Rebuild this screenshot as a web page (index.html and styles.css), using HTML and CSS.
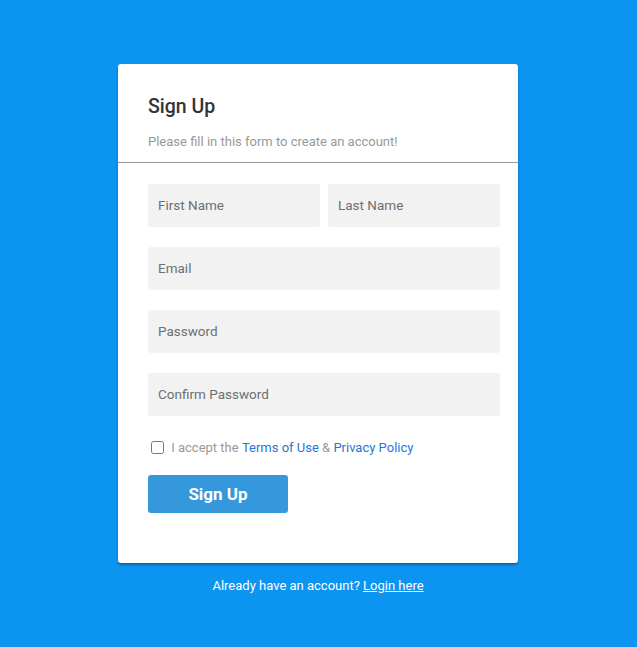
FILE: index.html
```html
<!DOCTYPE html>
<html>
<head>
<meta charset="utf-8">
<link rel="stylesheet" href="styles.css">
</head>
<body>
<div class="page">
  <form class="card">
    <h2 class="title">Sign Up</h2>
    <p class="hint">Please fill in this form to create an account!</p>
    <hr class="rule">
    <div class="row">
      <input class="field" type="text" placeholder="First Name">
      <input class="field" type="text" placeholder="Last Name">
    </div>
    <div class="row">
      <input class="field" type="email" placeholder="Email">
    </div>
    <div class="row">
      <input class="field" type="password" placeholder="Password">
    </div>
    <div class="row">
      <input class="field" type="password" placeholder="Confirm Password">
    </div>
    <label class="accept"><input class="check" type="checkbox"> I accept the <a href="#">Terms of Use</a> &amp; <a href="#">Privacy Policy</a></label>
    <button class="btn" type="button">Sign Up</button>
  </form>
  <div class="footer">Already have an account? <a href="#">Login here</a></div>
</div>
</body>
</html>
```
FILE: styles.css
```css
html, body {
  margin: 0;
  padding: 0;
}
body {
  background: #0b94f0;
  font-family: Roboto, "Liberation Sans", sans-serif;
  color: #333;
}
.page {
  display: flex;
  flex-direction: column;
  align-items: center;
  padding-top: 64px;
  padding-right: 1px;
}
.card {
  width: 400px;
  box-sizing: border-box;
  background: #fff;
  border-radius: 3px;
  box-shadow: 0 2px 2px rgba(0,0,0,0.3);
  padding: 31px 18px 50px 30px;
}
.title {
  margin: 0;
  font-size: 19.5px;
  font-weight: 500;
  color: #333;
  line-height: 24px;
}
.hint {
  margin: 15px 0 0;
  font-size: 13px;
  color: #999;
  line-height: 16px;
}
.rule {
  margin: 12px -18px 21px -30px;
  border: 0;
  border-top: 1px solid #9a9a9a;
  height: 0;
}
.row {
  display: flex;
  gap: 8px;
  margin-bottom: 20px;
}
.field {
  flex: 1;
  min-width: 0;
  height: 43px;
  box-sizing: border-box;
  border: 0;
  border-radius: 3px;
  background: #f2f2f2;
  padding: 0 10px 1px;
  font-family: Roboto, "Liberation Sans", sans-serif;
  font-size: 13.5px;
  color: #333;
}
.field::placeholder {
  color: #6f6f6f;
}
.accept {
  display: flex;
  align-items: center;
  font-size: 13px;
  color: #999;
  margin-left: 3px;
  margin-top: 24px;
  white-space: pre;
}
.check {
  margin: 0 4px 0 0;
  width: 13px;
  height: 13px;
}
.accept a {
  color: #2a75d6;
  text-decoration: none;
}
.btn {
  display: block;
  margin-top: 20px;
  width: 140px;
  height: 38px;
  border: 0;
  border-radius: 3px;
  background: #3598dc;
  color: #fff;
  font-family: Roboto, "Liberation Sans", sans-serif;
  font-weight: 700;
  font-size: 17px;
}
.footer {
  margin-top: 15px;
  font-size: 13px;
  color: #fff;
}
.footer a {
  color: #fff;
  text-decoration: underline;
}
```
